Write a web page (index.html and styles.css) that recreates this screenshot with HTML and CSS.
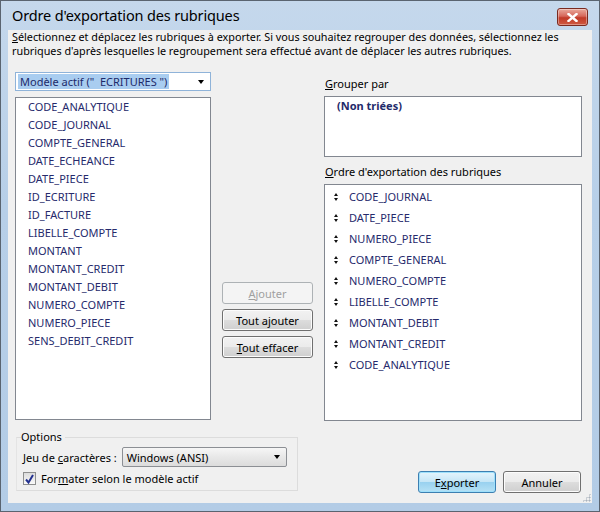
FILE: index.html
```html
<!DOCTYPE html>
<html lang="fr">
<head>
  <meta charset="UTF-8">
  <title>Ordre d'exportation des rubriques</title>
  <link rel="stylesheet" href="styles.css">
</head>
<body>

  <div class="window">
    <div class="titlebar">
      <span class="title">Ordre d'exportation des rubriques</span>
      <span class="close">
        <svg width="11" height="9" viewBox="0 0 11 9"><path d="M1.5 1 L9.5 8 M9.5 1 L1.5 8" stroke="#fff" stroke-width="2.4" stroke-linecap="square"/></svg>
      </span>
    </div>

    <div class="client">
      <p class="intro">Sélectionnez et déplacez les rubriques à exporter. Si vous souhaitez regrouper des données, sélectionnez les rubriques d'après lesquelles le regroupement sera effectué avant de déplacer les autres rubriques.</p>

      <div class="main">
        <div class="col-left">
          <div class="combo combo-model">
            <span class="combo-text sel">Modèle actif ("&nbsp;&nbsp;ECRITURES ")</span>
            <span class="arrow"></span>
          </div>
          <ul class="listbox list-fields">
            <li>CODE_ANALYTIQUE</li>
            <li>CODE_JOURNAL</li>
            <li>COMPTE_GENERAL</li>
            <li>DATE_ECHEANCE</li>
            <li>DATE_PIECE</li>
            <li>ID_ECRITURE</li>
            <li>ID_FACTURE</li>
            <li>LIBELLE_COMPTE</li>
            <li>MONTANT</li>
            <li>MONTANT_CREDIT</li>
            <li>MONTANT_DEBIT</li>
            <li>NUMERO_COMPTE</li>
            <li>NUMERO_PIECE</li>
            <li>SENS_DEBIT_CREDIT</li>
          </ul>
        </div>

        <div class="col-mid">
          <button class="btn" disabled><u>A</u>jouter</button>
          <button class="btn">Tout ajouter</button>
          <button class="btn"><u>T</u>out effacer</button>
        </div>

        <div class="col-right">
          <div class="label"><u>G</u>rouper par</div>
          <div class="listbox list-group">
            <div class="unsorted">(Non triées)</div>
          </div>
          <div class="label"><u>O</u>rdre d'exportation des rubriques</div>
          <ul class="listbox list-order">
            <li><i class="updown"></i>CODE_JOURNAL</li>
            <li><i class="updown"></i>DATE_PIECE</li>
            <li><i class="updown"></i>NUMERO_PIECE</li>
            <li><i class="updown"></i>COMPTE_GENERAL</li>
            <li><i class="updown"></i>NUMERO_COMPTE</li>
            <li><i class="updown"></i>LIBELLE_COMPTE</li>
            <li><i class="updown"></i>MONTANT_DEBIT</li>
            <li><i class="updown"></i>MONTANT_CREDIT</li>
            <li><i class="updown"></i>CODE_ANALYTIQUE</li>
          </ul>
        </div>
      </div>

      <div class="bottom">
        <fieldset class="options">
          <legend>Options</legend>
          <div class="opt-row">
            <span>Jeu de <u>c</u>aractères :</span>
            <div class="combo combo-charset">
              <span class="combo-text">Windows (ANSI)</span>
              <span class="arrow"></span>
            </div>
          </div>
          <label class="check-row">
            <span class="checkbox">
              <svg width="9" height="10" viewBox="0 0 9 10"><path d="M1 5.5 L3.5 8.5 L8 1" fill="none" stroke="#23318f" stroke-width="2"/></svg>
            </span>
            <span>For<u>m</u>ater selon le modèle actif</span>
          </label>
        </fieldset>

        <div class="actions">
          <button class="btn btn-default">E<u>x</u>porter</button>
          <button class="btn">Annuler</button>
        </div>
      </div>

      <span class="grip"></span>
    </div>
  </div>

</body>
</html>
```

FILE: styles.css
```css
* {
  box-sizing: border-box;
}
body {
  margin: 0;
  font-family: "Noto Sans", sans-serif;
  font-size: 11px;
  color: #000;
}
u {
  text-decoration: underline;
  text-underline-offset: 1px;
}
ul {
  list-style: none;
  margin: 0;
  padding: 0;
}

.window {
  width: 600px;
  height: 512px;
  border: 1px solid #5a6470;
  background: linear-gradient(#c5d8ec, #b7cfe8 40%, #b3cce6);
  padding: 0 7px 8px 7px;
  display: flex;
  flex-direction: column;
}
.titlebar {
  height: 30px;
  display: flex;
  align-items: center;
  justify-content: space-between;
  padding: 0 4px 2px 4px;
}
.title {
  font-family: "Noto Sans", sans-serif;
  font-size: 14.5px;
  color: #000;
  letter-spacing: -0.15px;
}
.close {
  width: 31px;
  height: 18px;
  margin-top: 5px;
  border: 1px solid #7a2a20;
  border-radius: 3px;
  background: linear-gradient(#e9a99c, #d6675a 45%, #c13a28 55%, #cf5a42);
  display: flex;
  align-items: center;
  justify-content: center;
  box-shadow: inset 0 0 0 1px rgba(255,255,255,0.35);
}

.client {
  flex: 1;
  background: #f0f0f0;
  position: relative;
  display: flex;
  flex-direction: column;
}
.intro {
  margin: 0;
  padding: 0 12px 0 4px;
  line-height: 14px;
  font-size: 10.8px;
  color: #000;
}
.intro::first-letter {
  text-decoration: underline;
  text-underline-offset: 1px;
}

.main {
  display: flex;
  margin-top: 14px;
  padding-left: 7px;
}
.col-left {
  width: 196px;
  display: flex;
  flex-direction: column;
}
.combo {
  height: 19px;
  border: 1px solid #a7b4c4;
  background: #fff;
  display: flex;
  align-items: center;
  padding: 0 6px 0 2px;
  justify-content: space-between;
}
.combo-model {
  border-color: #8fb3d9;
}
.combo-text {
  line-height: 15px;
  padding: 0 2px;
  white-space: nowrap;
}
.combo-text.sel {
  background: #a9cdf0;
  color: #1d2a6a;
}
.arrow {
  width: 0;
  height: 0;
  border-left: 3.5px solid transparent;
  border-right: 3.5px solid transparent;
  border-top: 4px solid #000;
}
.listbox {
  background: #fff;
  border: 1px solid #828790;
}
.list-fields {
  margin-top: 6px;
  height: 323px;
  padding: 0 0 0 12px;
}
.list-fields li {
  height: 18px;
  line-height: 17px;
  color: #262a6c;
}

.col-mid {
  width: 91px;
  margin-left: 11px;
  padding-top: 210px;
  display: flex;
  flex-direction: column;
  gap: 5px;
}
.btn {
  height: 22px;
  font-family: "Noto Sans", sans-serif;
  font-size: 11px;
  color: #000;
  border: 1px solid #707070;
  border-radius: 3px;
  background: linear-gradient(#f2f2f2, #ebebeb 50%, #dddddd 51%, #cfcfcf);
  padding: 0;
  box-shadow: inset 0 0 0 1px #fcfcfc;
}
.btn:disabled {
  color: #a0a0a0;
  border-color: #adb2b5;
  background: #f4f4f4;
  box-shadow: none;
}

.col-right {
  width: 258px;
  margin-left: 11px;
  display: flex;
  flex-direction: column;
}
.label {
  height: 24px;
  line-height: 24px;
  padding-left: 1px;
}
.list-group {
  height: 61px;
  padding: 2px 0 0 12px;
}
.unsorted {
  font-weight: bold;
  color: #1f2a6a;
  line-height: 14px;
}
.list-group + .label {
  margin-top: 3px;
}
.list-order {
  height: 237px;
  padding: 1px 0 0 9px;
}
.list-order li {
  height: 21px;
  line-height: 21px;
  color: #262a6c;
  display: flex;
  align-items: center;
}
.updown {
  width: 5px;
  height: 8px;
  margin-right: 10px;
  display: inline-block;
  position: relative;
}
.updown::before,
.updown::after {
  content: "";
  position: absolute;
  left: 0;
  border-left: 2.5px solid transparent;
  border-right: 2.5px solid transparent;
}
.updown::before {
  top: 0;
  border-bottom: 3px solid #111;
}
.updown::after {
  bottom: 0;
  border-top: 3px solid #111;
}

.bottom {
  display: flex;
  justify-content: space-between;
  align-items: flex-end;
  padding: 0 11px 10px 8px;
  margin-top: 9px;
}
.options {
  width: 282px;
  height: 61px;
  margin: 0 0 2px 0;
  border: 1px solid #dcdcdc;
  border-left-color: #e4e4e4;
  padding: 0 0 0 6px;
}
.options legend {
  padding: 0 3px 0 0;
  margin-left: -2px;
  line-height: 14px;
}
.opt-row {
  display: flex;
  align-items: center;
  margin-top: 3px;
  gap: 5px;
}
.combo-charset {
  width: 165px;
  height: 20px;
  border-color: #8c8f94;
  border-radius: 2px;
  background: linear-gradient(#f6f6f6, #e8e8e8 50%, #dcdcdc);
}
.check-row {
  display: flex;
  align-items: center;
  margin-top: 4px;
  gap: 5px;
}
.checkbox {
  width: 13px;
  height: 13px;
  border: 1px solid #8e8f8f;
  background: linear-gradient(#dcdcdc, #fafafa);
  display: flex;
  align-items: center;
  justify-content: center;
}
.actions {
  display: flex;
  gap: 7px;
}
.actions .btn {
  width: 78px;
  height: 22px;
}
.btn-default {
  border-color: #3c7fb1;
  background: linear-gradient(#e5f4fc, #c4e5f6 50%, #98d1ef 51%, #b6e1f5);
  box-shadow: inset 0 0 0 1px #9ee0fb;
}

.grip {
  position: absolute;
  right: 1px;
  bottom: 1px;
  width: 9px;
  height: 9px;
  background: radial-gradient(circle, #a9b2bd 45%, transparent 50%) 0 0 / 3px 3px;
  clip-path: polygon(100% 0, 100% 100%, 0 100%);
}
```
